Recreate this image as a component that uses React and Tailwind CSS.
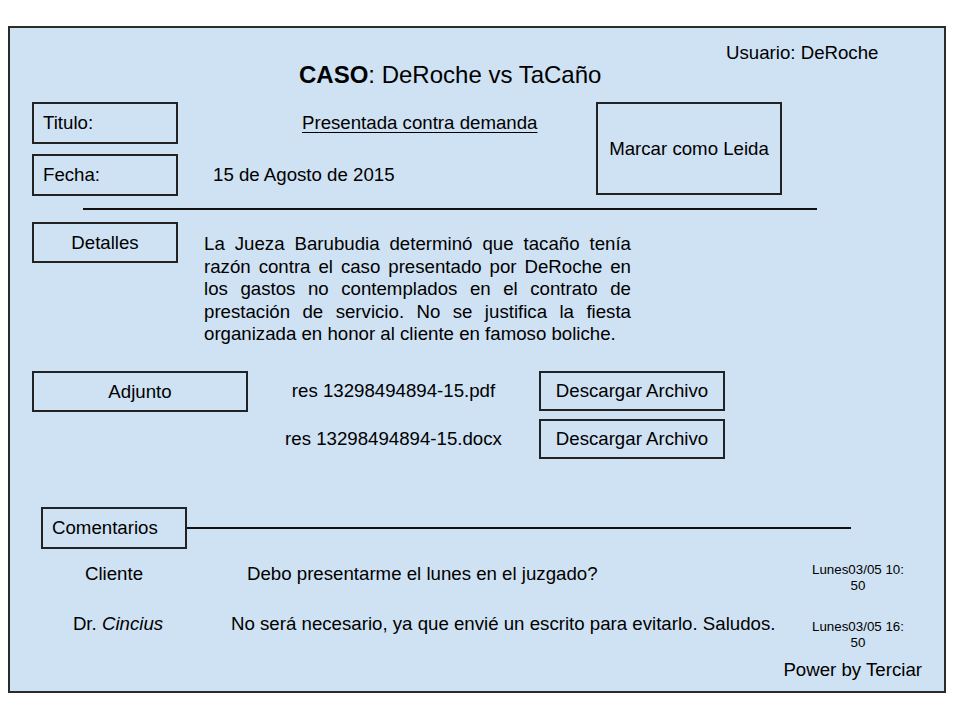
import React from "react";

const font = "font-['Liberation_Sans',Arial,sans-serif]";

function Box({ className = "", children }) {
  return (
    <div
      className={`box-border border-2 border-[#222] flex items-center ${className}`}
    >
      {children}
    </div>
  );
}

const lines = [
  "La Jueza Barubudia determinó que tacaño tenía",
  "razón contra el caso presentado por DeRoche en",
  "los gastos no contemplados en el contrato de",
  "prestación de servicio. No se justifica la fiesta",
];

export default function App() {
  return (
    <div
      className={`w-[960px] h-[720px] bg-white pt-[26px] pl-[8px] text-black ${font}`}
    >
      <div className="box-border w-[938px] h-[667px] border-2 border-[#2b2b2b] bg-[#cfe2f3] flex flex-col text-[18.67px]">
        {/* header */}
        <div className="flex h-[74px]">
          <div className="ml-[289px] mt-[33px] w-[427px] text-[24px] leading-[28px]">
            <span className="font-bold">CASO</span>: DeRoche vs TaCaño
          </div>
          <div className="mt-[14px] leading-[22px]">Usuario: DeRoche</div>
        </div>

        {/* titulo / fecha / marcar */}
        <div className="flex items-start">
          <div className="ml-[22px] w-[146px] flex flex-col gap-[10px]">
            <Box className="h-[42px] pl-[9px]">Titulo:</Box>
            <Box className="h-[42px] pl-[9px]">Fecha:</Box>
          </div>
          <div className="ml-[35px] w-[383px] flex flex-col gap-[10px]">
            <div className="h-[42px] flex items-center pl-[89px]">
              <span className="underline underline-offset-[3px]">
                Presentada contra demanda
              </span>
            </div>
            <div className="h-[42px] flex items-center">15 de Agosto de 2015</div>
          </div>
          <Box className="w-[186px] h-[93px] justify-center">Marcar como Leida</Box>
        </div>

        <div className="mt-[12px] ml-[73px] w-[734px] h-[2px] bg-[#111]" />

        {/* detalles */}
        <div className="flex items-start h-[124px] mt-[12px]">
          <Box className="ml-[22px] w-[146px] h-[41px] justify-center">Detalles</Box>
          <div className="ml-[26px] mt-[11px] w-[427px] leading-[22.5px]">
            {lines.map((l) => (
              <div key={l} className="text-justify [text-align-last:justify]">
                {l}
              </div>
            ))}
            <div>organizada en honor al cliente en famoso boliche.</div>
          </div>
        </div>

        {/* adjunto */}
        <div className="flex items-start mt-[25px]">
          <Box className="ml-[22px] w-[216px] h-[41px] justify-center">Adjunto</Box>
          <div className="flex flex-col gap-[8px]">
            <div className="flex items-center">
              <div className="w-[291px] text-center">res 13298494894-15.pdf</div>
              <Box className="w-[186px] h-[40px] justify-center">Descargar Archivo</Box>
            </div>
            <div className="flex items-center">
              <div className="w-[291px] text-center">res 13298494894-15.docx</div>
              <Box className="w-[186px] h-[40px] justify-center">Descargar Archivo</Box>
            </div>
          </div>
        </div>

        {/* comentarios */}
        <div className="flex items-center mt-[48px]">
          <Box className="ml-[31px] w-[146px] h-[42px] pl-[9px]">Comentarios</Box>
          <div className="w-[664px] h-[2px] bg-[#111]" />
        </div>

        <div className="flex items-start mt-[13px]">
          <div className="ml-[54px] w-[100px] mt-[1px] text-center leading-[22px]">
            Cliente
          </div>
          <div className="ml-[83px] w-[562px] mt-[1px] leading-[22px]">
            Debo presentarme el lunes en el juzgado?
          </div>
          <div className="w-[98px] text-center text-[13.33px] leading-[16px]">
            Lunes03/05 10:
            <br />
            50
          </div>
        </div>

        <div className="flex items-start mt-[19px]">
          <div className="ml-[58px] w-[100px] text-center leading-[22px]">
            Dr. <span className="italic">Cincius</span>
          </div>
          <div className="ml-[63px] w-[578px] leading-[22px]">
            No será necesario, ya que envié un escrito para evitarlo. Saludos.
          </div>
          <div className="mt-[6px] w-[98px] text-center text-[13.33px] leading-[16px]">
            Lunes03/05 16:
            <br />
            50
          </div>
        </div>

        <div className="self-end mr-[22px] mt-[8px] leading-[22px]">Power by Terciar</div>
      </div>
    </div>
  );
}
